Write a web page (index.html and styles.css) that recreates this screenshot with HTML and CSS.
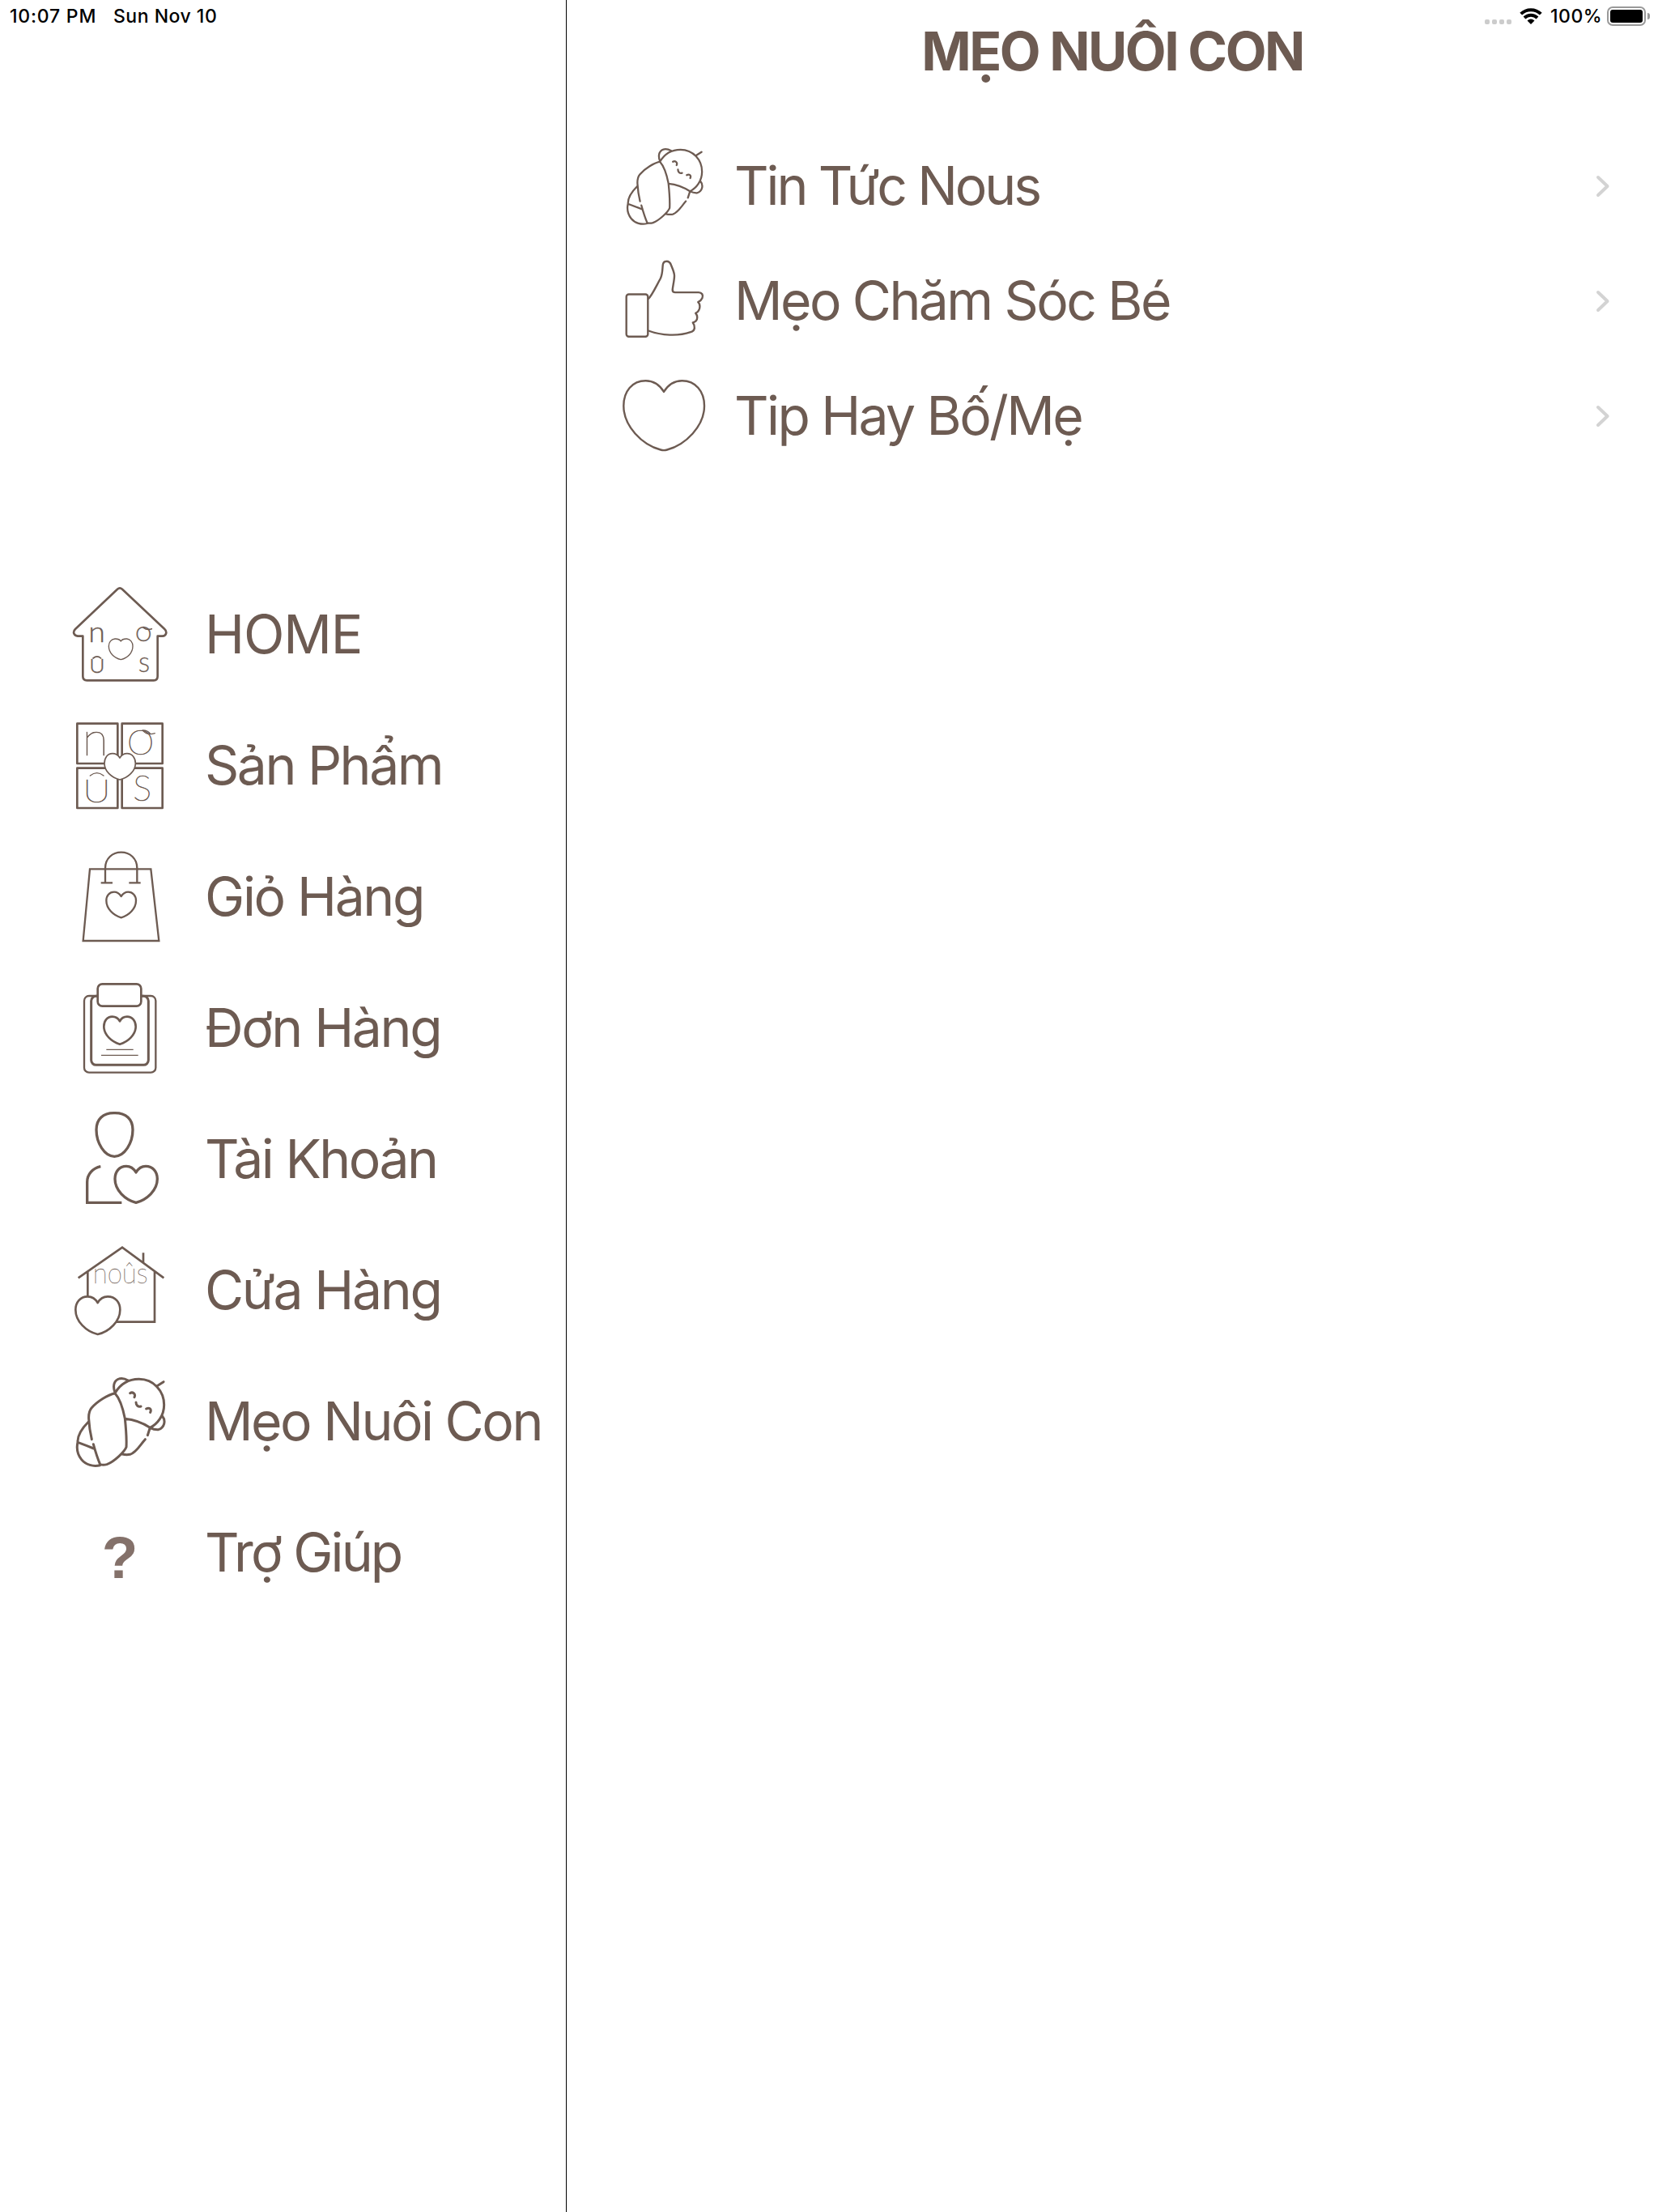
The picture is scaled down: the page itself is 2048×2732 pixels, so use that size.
FILE: index.html
```html
<!DOCTYPE html>
<html lang="vi">
<head>
<meta charset="utf-8">
<title>Mẹo Nuôi Con</title>
<link rel="stylesheet" href="styles.css">
</head>
<body>
<svg class="defs" aria-hidden="true">
  <symbol id="baby" viewBox="0 -12 420 420">
    <path d="M186 92C160 98 120 122 99 147C90 158 88 172 89 188Q91 225 100 263M186 92C204 112 217 155 223 186C226 215 230 255 228 292C222 308 185 345 156 356Q142 360 131 356C122 335 114 310 106 281M88 198C68 218 47 248 48 273C43 295 46 318 62 338C78 358 106 365 131 359M50 275Q80 286 107 297M186 92C205 60 236 40 275 40C330 40 368 85 368 135C368 175 344 206 316 220C290 203 255 190 223 187M186 90C176 62 184 43 204 38Q218 35 235 45M341 66L366 50M361 176C376 194 369 220 347 227Q332 228 316 220L307 248M298 263C280 283 265 312 242 319Q228 322 213 318M242 92C251 86 264 94 258 107M264 126C264 137 272 144 282 141M302 150C312 144 323 150 317 163"/>
  </symbol>
  <symbol id="chevron" viewBox="0 0 20 32">
    <path d="M4 5L15.500 16L4 27"/>
  </symbol>
</svg>

<div class="screen">
  <aside class="sidebar">
    <div class="status status-left"><span class="time">10:07 PM</span><span class="date">Sun Nov 10</span></div>
    <nav class="menu">
      <a class="menu-item">
        <svg class="icon" viewBox="0 12 420 420">
          <path class="w8" d="M67 227V376Q67 391 82 391H330Q344 391 344 376V227H362C377 226 380 210 370 201L213 53Q204 45 195 53L39 201C28 212 34 226 48 227Z"/>
          <path class="w4" d="M208 246C201 236 191 237 186 237C172 238 163 250 163 264C163 289 183 308 208 314C233 308 252 289 252 264C252 250 243 238 230 237C224 237 214 236 208 246Z"/>
          <path class="w5" d="M105 309Q120 296 134 309M292 196Q305 206 322 200"/>
          <g class="mark bold"><text x="88" y="248" font-size="107" textLength="62" lengthAdjust="spacingAndGlyphs">n</text><text x="262" y="247" font-size="76">O</text><text x="91" y="364" font-size="69" textLength="58" lengthAdjust="spacingAndGlyphs">U</text><text x="273" y="361" font-size="78">S</text></g>
        </svg>
        <span class="label home">HOME</span>
      </a>
      <a class="menu-item">
        <svg class="icon" viewBox="0 -12 420 420">
          <path class="w8" d="M46 41H196V189H46ZM212 41H362V189H212ZM46 206H196V354H46ZM212 206H362V354H212Z"/>
          <g class="mark"><text x="65" y="159" font-size="176">n</text><text x="231" y="157" font-size="127">O</text><text x="67" y="334" font-size="122" textLength="103" lengthAdjust="spacingAndGlyphs">U</text><text x="253" y="326" font-size="130">S</text></g>
          <path class="w5 solid" d="M204 168C196 155 186 152 177 152C158 152 147 168 147 188C147 218 174 242 204 249C234 242 262 218 262 188C262 168 250 152 231 152C222 152 212 155 204 168Z"/>
          <path class="w4" d="M94 234Q119 214 144 234M290 68Q306 86 334 77M288 66Q306 65 318 80"/>
        </svg>
        <span class="label san-pham">Sản Phẩm</span>
      </a>
      <a class="menu-item">
        <svg class="icon" viewBox="0 -6 420 420">
          <path class="w7 miter" d="M93 100H319L349 366H68ZM134 151H177M238 151H281M150 151V97C150 61 176 38 209 38C242 38 268 61 268 97V151"/>
          <path class="w7" d="M209 201C201 189 192 185 183 185C165 185 154 199 154 217C154 247 180 272 209 280C238 272 264 247 264 217C264 199 252 185 235 185C226 185 217 189 209 201Z"/>
        </svg>
        <span class="label gio-hang">Giỏ Hàng</span>
      </a>
      <a class="menu-item">
        <svg class="icon" viewBox="0 480 420 420">
          <rect class="w7" x="72" y="570" width="265" height="284" rx="18"/>
          <rect class="w9" x="98" y="571" width="212" height="255" rx="18"/>
          <rect class="w8 solid" x="122" y="526" width="161" height="82" rx="17"/>
          <path class="w8" d="M204 664C196 650 186 647 176 647C157 647 145 663 145 683C145 714 173 740 204 749C235 740 263 714 263 683C263 663 250 647 231 647C221 647 211 650 204 664Z"/>
          <path class="w4 miter" d="M154 769H254M135 790H272"/>
        </svg>
        <span class="label don-hang">Đơn Hàng</span>
      </a>
      <a class="menu-item">
        <svg class="icon" viewBox="0 6 420 420">
          <path class="w10 miter" d="M184 44C227 43 252 67 252 106C252 155 222 205 184 205C147 205 117 155 117 106C117 67 142 43 184 44ZM133 242C104 248 83 271 83 300V376H211"/>
          <path class="w10" d="M264 264C254 247 241 241 228 241C202 241 186 261 186 288C186 330 223 365 264 376C305 365 343 330 343 288C343 261 326 241 300 241C287 241 274 247 264 264Z"/>
        </svg>
        <span class="label tai-khoan">Tài Khoản</span>
      </a>
      <a class="menu-item">
        <svg class="icon" viewBox="0 492 420 420">
          <path class="w8 miter" d="M50 655L213 542L367 655M291 598V562M85 632V724M333 630V818H190"/>
          <path class="w8 solid" d="M122 747C112 730 100 724 85 724C57 724 40 746 40 773C40 816 79 854 122 864C165 854 205 816 205 773C205 746 188 724 159 724C144 724 132 730 122 747Z"/>
          <g class="mark fine"><text x="104" y="674" font-size="105" textLength="204" lengthAdjust="spacingAndGlyphs">noûs</text></g>
        </svg>
        <span class="label cua-hang">Cửa Hàng</span>
      </a>
      <a class="menu-item">
        <svg class="icon w9"><use href="#baby"/></svg>
        <span class="label meo-nuoi">Mẹo Nuôi Con</span>
      </a>
      <a class="menu-item">
        <span class="icon question">?</span>
        <span class="label tro-giup">Trợ Giúp</span>
      </a>
    </nav>
  </aside>

  <main class="content">
    <header class="header">
      <h1 class="title">MẸO NUÔI CON</h1>
      <div class="status status-right">
        <span class="dots"><i></i><i></i><i></i><i></i></span>
        <svg class="wifi" viewBox="0 0 28 20">
          <path d="M1.700 7.200A17.500 17.500 0 0 1 26.300 7.200M6 12A11.400 11.400 0 0 1 22 12"/>
          <path class="wifi-dot" d="M9.500 15.500Q14 11.500 18.500 15.500L14 20Z"/>
        </svg>
        <span class="percent">100%</span>
        <span class="battery"><i></i></span><span class="nub"></span>
      </div>
    </header>
    <section class="tips">
      <a class="tip">
        <svg class="tip-icon w8"><use href="#baby"/></svg>
        <span class="label tin-tuc">Tin Tức Nous</span>
        <svg class="chevron"><use href="#chevron"/></svg>
      </a>
      <a class="tip">
        <svg class="tip-icon thin" viewBox="0 1.500 120 120">
          <rect x="11.700" y="53" width="26.600" height="52.200" rx="3"/>
          <path d="M39 58.300C43 55 48 44 53.800 33.500C57 27 56 19 57 15.500Q58 12.300 61 12.300C64.500 12 66 14 67 17C69 22 71 26 71 30C71 36 69 43 68.700 47.500Q68.700 50.600 72 50.600H101C105 50.600 107 54 105.500 57.500C104 61 102 62 100.300 62.700C103 65 103 70 101 73C100 75 98 76 97.200 76.300C100 79 99.800 84 97.500 86Q95.500 87.500 93.800 88C97 92 97 98 91 99.700C76 105 55 104 39 98"/>
        </svg>
        <span class="label cham-soc">Mẹo Chăm Sóc Bé</span>
        <svg class="chevron"><use href="#chevron"/></svg>
      </a>
      <a class="tip">
        <svg class="tip-icon thin" viewBox="0 2.700 120 120">
          <path d="M58 32.600C52 23 45 19 35.500 19C19 19 8.300 32 8.300 50C8.300 75 31 98 54 104.200Q58 105.500 62 104.200C85 98 108 75 108 50C108 32 97 19 80.500 19C71 19 64 23 58 32.600Z"/>
        </svg>
        <span class="label tip-hay">Tip Hay Bố/Mẹ</span>
        <svg class="chevron"><use href="#chevron"/></svg>
      </a>
    </section>
  </main>
</div>
</body>
</html>
```
FILE: styles.css
```css
* { box-sizing: border-box; }
body {
  margin: 0;
  background: #fff;
  color: #6d5b52;
  font-family: Inter, "Liberation Sans", sans-serif;
}
.defs { display: block; width: 0; height: 0; position: absolute; }
.screen { display: flex; width: 2048px; height: 2732px; overflow: hidden; }

.sidebar {
  width: 700px;
  height: 100%;
  border-right: 1px solid #000;
  display: flex;
  flex-direction: column;
}
.status {
  display: flex;
  align-items: center;
  height: 40px;
  color: #000;
  font-size: 23px;
  font-weight: 500;
  white-space: nowrap;
}
.status-left { padding-left: 12px; gap: 18px; }
.time { width: 110px; letter-spacing: 0.8px; }
.date { letter-spacing: 0.5px; }

.menu { padding: 663px 0 0 80px; }
.menu-item { display: flex; align-items: center; height: 162px; gap: 33px; }
.icon { width: 140px; height: 140px; flex: none; overflow: visible; }
.question {
  font: bold 73px/140px "Liberation Sans", sans-serif;
  color: #84716a;
  text-align: center;
  padding-top: 6px;
  padding-right: 4px;
}
.label {
  font-size: 66px;
  line-height: 80px;
  padding-bottom: 2px;
  white-space: nowrap;
}
.home { letter-spacing: -1.1px; }
.san-pham, .tai-khoan, .meo-nuoi { letter-spacing: -2.5px; }
.gio-hang, .don-hang, .cua-hang { letter-spacing: -2.35px; }
.tro-giup { letter-spacing: -2.85px; }
.tin-tuc { letter-spacing: -3.1px; }
.cham-soc, .tip-hay { letter-spacing: -2.6px; }

svg { fill: none; stroke: #6d5b52; stroke-linecap: round; stroke-linejoin: round; }
.w4 { stroke-width: 4; }
.w5 { stroke-width: 5; }
.w7 { stroke-width: 7; }
.w8 { stroke-width: 8; }
.w9 { stroke-width: 9; }
.w10 { stroke-width: 10; }
.thin { stroke-width: 2.4; }
.miter { stroke-linecap: butt; stroke-linejoin: miter; }
.solid { fill: #fff; }
.mark { font-family: Lato, sans-serif; font-weight: 100; fill: #6d5b52; stroke-width: 2.2; }
.mark.fine { stroke-width: 0.8; }
.mark.bold { font-weight: 300; stroke-width: 1; }

.content { flex: 1; display: flex; flex-direction: column; }
.header { position: relative; height: 159px; padding-top: 23px; }
.title {
  margin: 0;
  text-align: center;
  font-size: 66px;
  line-height: 80px;
  font-weight: 700;
  letter-spacing: -2.5px;
}
.status-right { position: absolute; top: 0; right: 10px; }
.dots { display: flex; gap: 3px; margin: 14px 10px 0 0; }
.dots i { width: 6px; height: 6px; border-radius: 2px; background: #ccc; }
.wifi { width: 28px; height: 20px; stroke: #000; stroke-width: 4; stroke-linecap: butt; margin-right: 10px; }
.wifi-dot { fill: #000; stroke: none; }
.percent { width: 70px; letter-spacing: 0.5px; }
.battery { width: 48px; height: 24px; border: 2px solid #999; border-radius: 7px; padding: 2px; }
.battery i { display: block; height: 16px; border-radius: 3px; background: #000; }
.nub { width: 3px; height: 8px; margin-left: 2px; border-radius: 0 4px 4px 0; background: #999; }

.tip { display: flex; align-items: center; height: 142px; padding: 0 58px 0 62px; }
.tip .label { padding-bottom: 3px; }
.tip-icon { width: 120px; height: 120px; flex: none; margin-right: 25px; }
.chevron { width: 20px; height: 32px; margin-left: auto; stroke: #d3d3d3; stroke-width: 4; }
```
